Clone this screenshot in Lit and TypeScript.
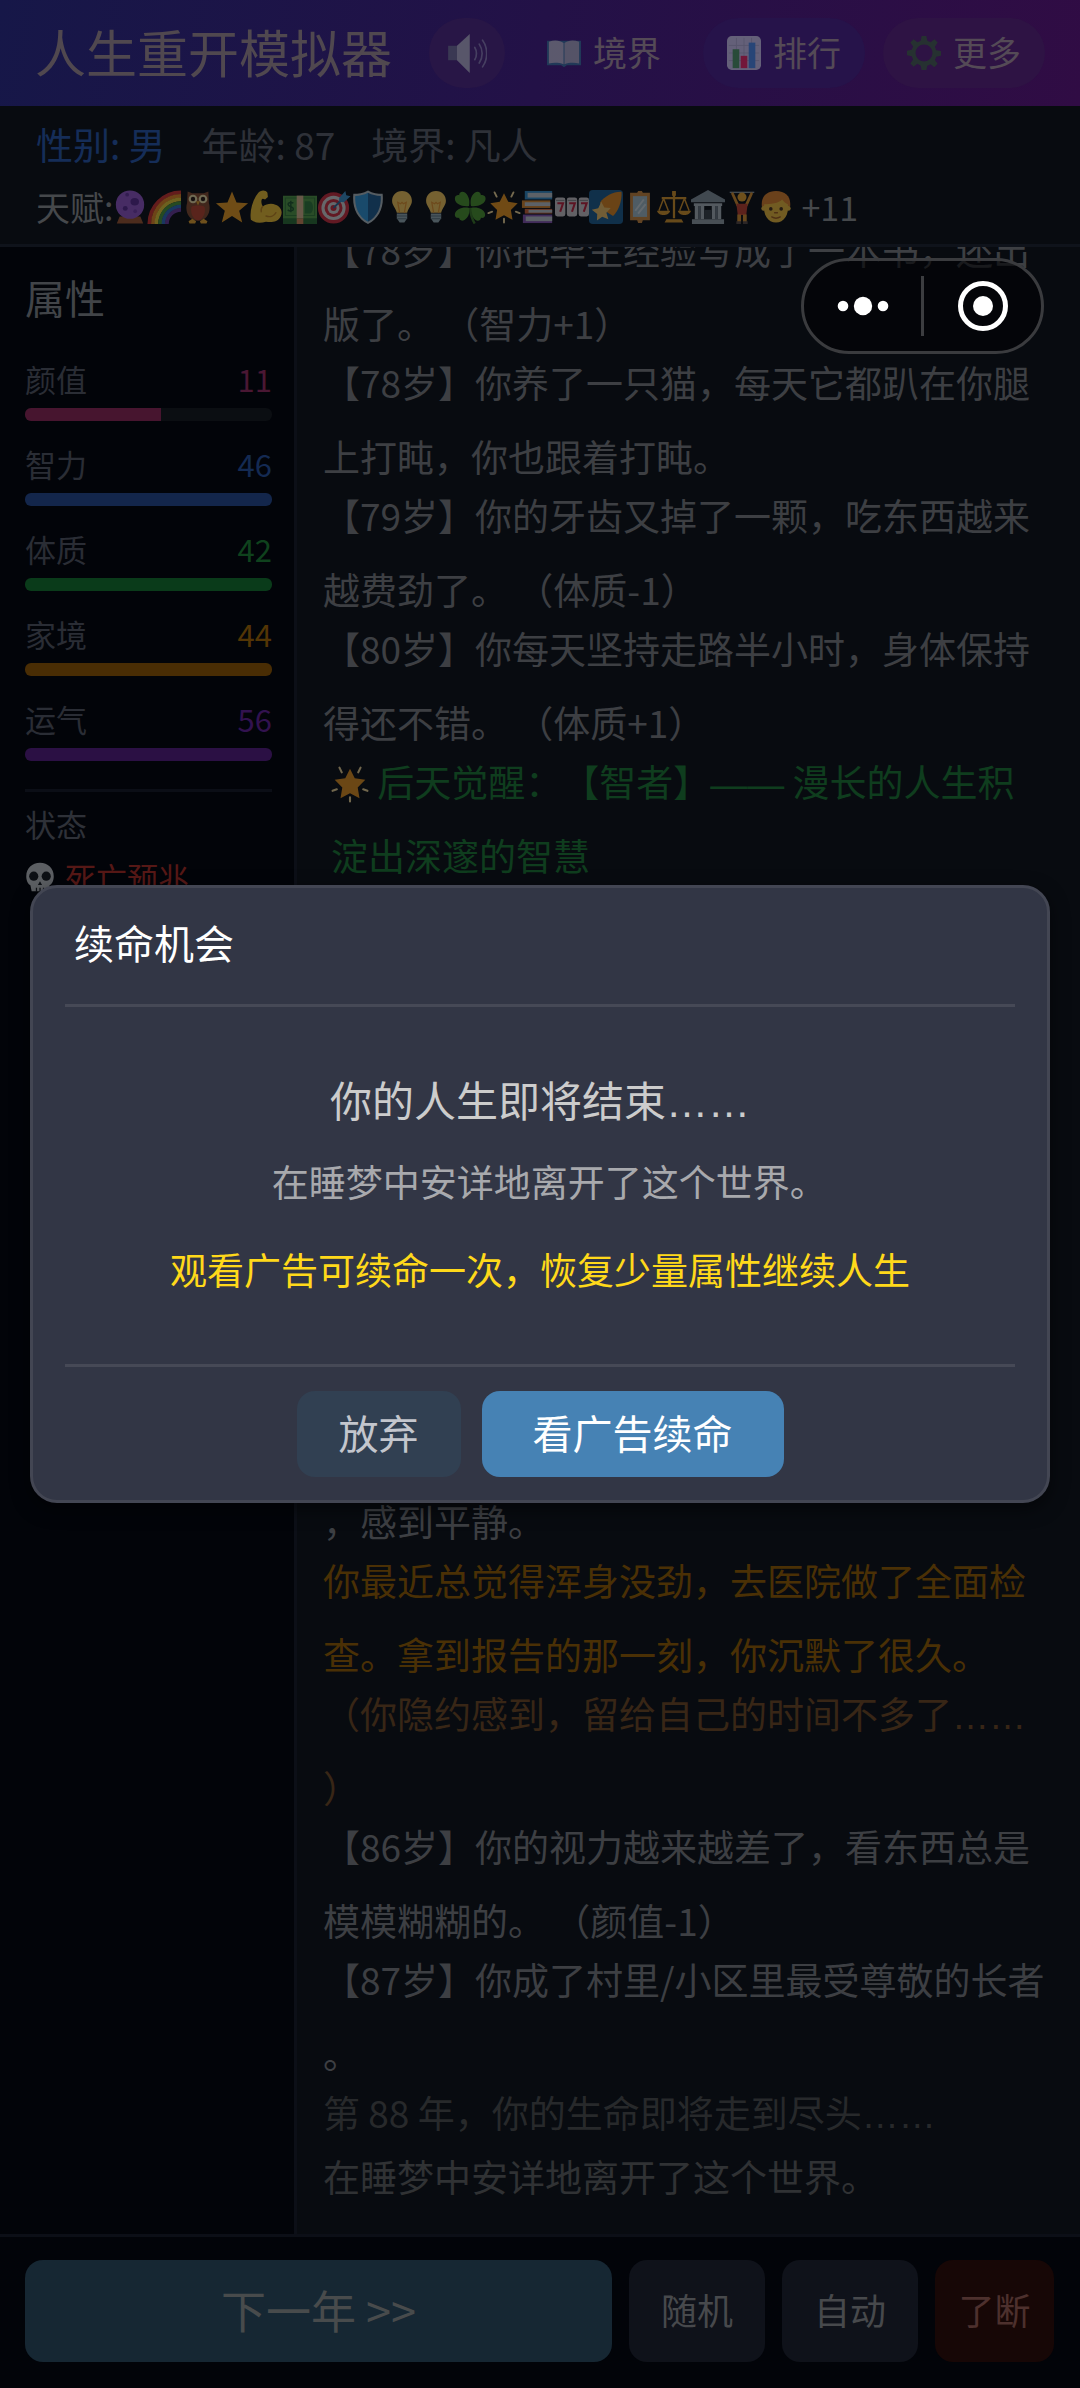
import { LitElement, html, svg, css, nothing } from "lit";
import type { SVGTemplateResult } from "lit";
import { customElement, state } from "lit/decorators.js";

type Tone = "plain" | "gain" | "warn" | "hint" | "faint" | "final";

interface LogEntry {
  tone: Tone;
  lines: string[];
  icon?: string;
}

interface Stat {
  label: string;
  value: number;
  percent: number;
  tone: string;
}

/* Emoji-style pictures, all drawn on a 36 x 36 grid. */
const glowStar = svg`
  <path fill="#f49a1c" d="M18 3.500l4.500 9 10 1.500-7.200 7.200 1.700 10.300-9-4.700-9 4.700 1.700-10.300L3.500 14l10-1.500z"/>
  <g stroke="#ffe3a0" stroke-width="2" stroke-linecap="round">
    <path d="M8 2.500l2.200 4.500M28 2.500L25.800 7M1.500 24.500l4-1.500M34.500 24.500l-4-1.500M18 30.500v4"/>
  </g>`;

const bulb = svg`
  <path fill="#ffcf5c" d="M18 1C11.400 1 7.500 5.800 7.500 11.500c0 5 3.800 7.700 5 12.500h11c1.200-4.800 5-7.500 5-12.500C28.500 5.800 24.600 1 18 1z"/>
  <path fill="none" stroke="#f09a2c" stroke-width="1.300" d="M15.500 24l-2-11 3 1.500 1.500-1.500 1.500 1.500 3-1.500-2 11"/>
  <path fill="#9db4bb" d="M12.500 25h11v5l-3 4.500h-5l-3-4.500z"/>
  <path stroke="#5d7680" stroke-width="1.200" d="M12.500 27.500h11M13 30.500h10"/>`;

const pictures: Record<string, SVGTemplateResult> = {
  orb: svg`
    <path fill="#a3572f" d="M7 28h22l3 7.500H4z"/>
    <circle cx="18" cy="15.500" r="15" fill="#9858d0"/>
    <ellipse cx="23" cy="12.500" rx="4.500" ry="4" fill="#5c2a96"/>
    <circle cx="13" cy="19.500" r="2.600" fill="#5c2a96"/>
    <circle cx="15" cy="5" r="2" fill="#6a35a5"/>
    <circle cx="23.500" cy="22.500" r="2" fill="#7a3fb5"/>`,
  rainbow: svg`
    <g fill="none" stroke-width="4">
      <path stroke="#d8322d" d="M2.500 36A33.500 33.500 0 0 1 36 2.500"/>
      <path stroke="#f08a24" d="M6.300 36A29.700 29.700 0 0 1 36 6.300"/>
      <path stroke="#f0cf34" d="M10 36A26 26 0 0 1 36 10"/>
      <path stroke="#4c9a3a" d="M13.800 36A22.200 22.200 0 0 1 36 13.800"/>
      <path stroke="#2f6fc4" d="M17.500 36A18.500 18.500 0 0 1 36 17.500"/>
      <path stroke="#6b3aa0" d="M21 36A15 15 0 0 1 36 21"/>
    </g>`,
  owl: svg`
    <path fill="#8a4b2c" d="M7 1.500l5 2h12l5-2 .5 12C32 21 29 32.500 18 32.500S4 21 6.500 13.500z"/>
    <path fill="#c0452c" d="M11 18c2-2 12-2 14 0 1.500 6-2 14-7 14s-8.500-8-7-14z"/>
    <circle cx="12.700" cy="9.500" r="4.600" fill="#f4e3a8"/>
    <circle cx="23.300" cy="9.500" r="4.600" fill="#f4e3a8"/>
    <circle cx="12.700" cy="9.500" r="2.300" fill="#2c1a12"/>
    <circle cx="23.300" cy="9.500" r="2.300" fill="#2c1a12"/>
    <path fill="#f0a92c" d="M16 12h4l-2 4.500zM8 33l4-2.500 4 2.500-1 2.500H9zM20 33l4-2.500 4 2.500-1 2.500h-6z"/>`,
  star: svg`<path fill="#f2a01e" d="M18 1.500l4.800 11.800 12.200.7-9.400 8 3.200 12.500L18 27.500 7.200 34.500 10.400 22 1 14l12.200-.7z"/>`,
  arm: svg`
    <path fill="#f7c531" d="M9.500 3.500C12 0 17.500-.5 19.500 3l.5 4.500-3 2.500c-2-1-3-1-3.500 0-1 2.500 0 5.500 1 7.500 4-3 9.500-3.500 13.500-2C34 17.500 36 23 33.500 28c-3 6-10 6.500-15.500 5.500-6 2-12 1.500-16-2C.5 23 3.500 11 9.500 3.500z"/>
    <path fill="none" stroke="#c98a1c" stroke-width="1.500" stroke-linecap="round" d="M14.500 17.500c-1.500 1.500-2 3.500-1.500 5.500M18 27.500c4 1.500 8.500.5 10.500-3.500"/>`,
  money: svg`
    <path fill="#2a6f34" d="M0 29h36v7H0z"/>
    <path fill="#55a046" d="M0 6h36v24H0z"/>
    <path fill="none" stroke="#357f38" stroke-width="1.200" d="M2.500 8.500h31v18.500h-31z"/>
    <path fill="#2f7d3a" d="M23 12h5c5 0 5 13 0 13h-5z"/>
    <path fill="#e0bb90" d="M14.500 6h7v24h-7z"/>
    <path fill="#d88a5a" d="M14.500 30h7v6h-7z"/>
    <path fill="none" stroke="#1f5a2c" stroke-width="1.600" d="M11 14c-1.500-1.500-6-1-5.500 1.500.5 2.500 5.500 2 5.500 4.500 0 2.300-4 2.800-6 1M8.300 11.500v12"/>`,
  target: svg`
    <circle cx="17.500" cy="19" r="16.500" fill="#d42c3c"/>
    <circle cx="17.500" cy="19" r="12.800" fill="#ddd"/>
    <circle cx="17.500" cy="19" r="9.500" fill="#d42c3c"/>
    <circle cx="17.500" cy="19" r="6.300" fill="#ddd"/>
    <circle cx="17.500" cy="19" r="3.200" fill="#d42c3c"/>
    <path stroke="#2a6ea0" stroke-width="2" d="M17.500 19L27 9.500"/>
    <path fill="#3a94d0" d="M23.500 8.500L30 1l1 4.500 4.500 1L28.500 13l-5-.5z"/>`,
  shield: svg`
    <path fill="#b9c6cc" d="M18 .5c5 2.800 10 3.500 15.500 3.500C35 18 30 30 18 36 6 30 1 18 2.500 4 8 4 13 3.300 18 .5z"/>
    <path fill="#2f9be0" d="M18 3c-4.500 2.300-8.500 3.200-13.500 3.300C3.800 18 8 28.300 18 33.700z"/>
    <path fill="#1d5f97" d="M18 3c4.500 2.300 8.500 3.200 13.500 3.300C32.200 18 28 28.300 18 33.700z"/>`,
  bulb,
  clover: svg`
    <path fill="#4e9a2c" d="M17 17C10 18 1.500 15 2 8.500 2.500 5 5.500 5 6.500 5.500 6.500 2 10 .5 13 3c4 3.500 5 9 4 14zM19 17c-1-6 0-11 4-14 3-2.500 6.500-1 6.500 2.500 1-.5 4.500-.5 5 3C35 15 26 18 19 17zM17 19c1 6-1 10-4.500 12.500-3 2-6 .5-6-2-2 .5-5-.5-4.500-4C3 20.500 10 17.500 17 19zM19 19c7-1.500 14 1.500 15 6.500.5 3.500-2 4.500-4.500 4 0 2.500-2.500 4-5 2.500-3.500-2-6-7-5.500-13z"/>
    <path fill="none" stroke="#3a7a24" stroke-width="2.500" d="M18 19c.5 6 1.500 11 5 16.500"/>`,
  glow: glowStar,
  books: svg`
    <path fill="#2f8fd0" d="M4 1h29v9H4z"/><path fill="#c8d0d6" d="M7 3h26v5H7z"/>
    <path fill="#e08a2c" d="M1 11h30v8H1z"/><path fill="#c8d0d6" d="M4 13h27v4H4z"/>
    <path fill="#d8663a" d="M4 20h29v5H4z"/><path fill="#c8d0d6" d="M8 21h25v3H8z"/>
    <path fill="#8a55b8" d="M2 26h31v9H2z"/><path fill="#c8d0d6" d="M5 28h28v5H5z"/>`,
  slots: svg`
    <g fill="#d4d0d2"><rect y="8" width="11" height="20" rx="2.500"/><rect x="12.500" y="8" width="11" height="20" rx="2.500"/><rect x="25" y="8" width="11" height="20" rx="2.500"/></g>
    <path fill="none" stroke="#c8203c" stroke-width="2.200" d="M2.500 14h6l-3 9M15 14h6l-3 9M27.500 14h6l-3 9"/>
    <path stroke="#888" stroke-width="1" d="M1 11h9M13.500 11h9M26 11h9"/>`,
  comet: svg`
    <rect width="36" height="36" rx="4" fill="#1b5f94"/>
    <path fill="#e88a1e" d="M34.500 2c-8-.5-18 4.500-23 11.500l6 9 8 5C31 22 35 12 34.500 2z"/>
    <path fill="#f7c768" d="M13 12.500l3.200 6 6.800.5-4.600 5 2.100 7-6.500-2.600-5.600 4 .3-7L3 21l6.800-1.700z"/>`,
  mirror: svg`
    <path fill="#d28a3c" d="M16 1h4l1 2h7.500v29H21l-1 3h-4l-1-3H7.500V3H15z"/>
    <path fill="#a9c4d0" d="M10.500 6.500h15v22h-15z"/>
    <path stroke="#d8e2e6" stroke-width="2" d="M13 22l9-12M16 25l8-10"/>`,
  scales: svg`
    <g fill="none" stroke="#e09a28" stroke-width="1.600"><path d="M7 9L2 22M7 9l5 13M29 9l-5 13M29 9l5 13"/><path stroke-width="2.400" d="M5 8.500h26M18 2v28"/></g>
    <path fill="#e09a28" d="M0 22h14c-1 6-13 6-14 0zM22 22h14c-1 6-13 6-14 0zM10 31h16l2 3.500H8zM16 1h4v5h-4z"/>`,
  bank: svg`
    <path fill="#8a98a2" d="M18 0L36 10v3H0v-3z"/>
    <path fill="#b3bdc4" d="M3 14h30v3H3zM4 17h4v14H4zM28 17h4v14h-4zM10 17h4v14h-4zM22 17h4v14h-4z"/>
    <path fill="#6d7a84" d="M8 17h2v14H8zM26 17h2v14h-2z"/>
    <path fill="#3a434a" d="M14 21h8v10h-8z"/>
    <path fill="#9aa6ae" d="M1 31h34v5H1z"/>`,
  lifter: svg`
    <path stroke="#8b9aa4" stroke-width="1.500" d="M5 2.500h26"/>
    <path fill="none" stroke="#e0942c" stroke-width="3" stroke-linecap="round" d="M8 4l5.500 12M28 4l-5.500 12"/>
    <circle cx="18" cy="7.500" r="4.800" fill="#f0a92c"/>
    <path fill="#c8402c" d="M12 14.500h12l-1.500 12h-9z"/>
    <path fill="#e0942c" d="M13 26h4v8h-4zM19 26h4v8h-4z"/>
    <path fill="#5a4a44" d="M12 33h5v3h-5zM19 33h5v3h-5z"/>`,
  man: svg`
    <path fill="#e8862a" d="M3 17C2 7 8 1 18 1s16 6 15 16l-3 4H6z"/>
    <path fill="#f7c23a" d="M5.500 15c6 0 16-1 19-5 1.500 2.500 4 4 6 5C32 26 26.500 34.500 18 34.500S4 26 5.500 15z"/>
    <circle cx="5" cy="19.500" r="2.600" fill="#f7c23a"/><circle cx="31" cy="19.500" r="2.600" fill="#f7c23a"/>
    <circle cx="12.500" cy="20" r="1.900" fill="#4a3018"/><circle cx="23.500" cy="20" r="1.900" fill="#4a3018"/>
    <path fill="none" stroke="#a8601c" stroke-width="1.500" stroke-linecap="round" d="M16.500 24h3M13.500 28.500c2.500 1.500 6.500 1.500 9 0"/>`,
  skull: svg`
    <path fill="#c9cdd0" d="M18 1C8.500 1 1.500 7.500 1.500 17c0 6 2.500 9.500 5 11l1.500 7h20l1.500-7c2.500-1.500 5-5 5-11C34.500 7.500 27.500 1 18 1z"/>
    <circle cx="10.500" cy="17" r="5.500" fill="#1c2024"/><circle cx="25.500" cy="17" r="5.500" fill="#1c2024"/>
    <path fill="#1c2024" d="M18 23l2.500 4.500h-5zM13 31h1.500v5H13zM17.300 31h1.500v5h-1.500zM21.500 31H23v5h-1.500z"/>`,
  speaker: svg`
    <path fill="#4c5a60" d="M1 11.500h9v13H1z"/>
    <path fill="#88968f" d="M9 11.500L20.500 1v35L9 24.500z"/>
    <g fill="none" stroke="#65697c" stroke-width="1.500" stroke-linecap="round"><path d="M25 13c2 3 2 8 0 11M29 10c3.500 5 3.500 12 0 17M32 6.500c5 7 5 17 0 24"/></g>`,
  book: svg`
    <path fill="#1f5a66" d="M0 5h36v26H21l-3 2-3-2H0z"/>
    <path fill="#8a958c" d="M2 6c6-2 12-1.500 15.500 1.500V30C13 28 7 28 2 29z"/>
    <path fill="#7d8a82" d="M34 6c-6-2-12-1.500-15.500 1.500V30C23 28 29 28 34 29z"/>`,
  chart: svg`
    <rect width="36" height="36" rx="5" fill="#98a0a0"/>
    <path stroke="#818a8a" stroke-width="1" d="M2 10h32M2 18h32M2 26h32M10 2v32M18 2v32M26 2v32"/>
    <path fill="#2c7a2c" d="M6 14h7v20H6z"/><path fill="#b01c2c" d="M14.500 21h7v13h-7z"/><path fill="#2a6f9c" d="M23 7h7v27h-7z"/>`,
  gear: svg`
    <path fill="#26352f" fill-rule="evenodd" d="M15.500 0h5l1 5 3.500 1.500L29 3.500 32.500 7l-3 4.500 1.500 3.500 5 1v5l-5 1-1.500 3.500 3 4-3.500 3.500-4-3-3.500 1.500-1 5h-5l-1-5L11 29.500l-4 3L3.500 29l3-4L5 21.500l-5-1v-5l5-1L6.500 11l-3-4L7 3.500l4 3L14.500 5zM18 9a9 9 0 1 0 0 18 9 9 0 0 0 0-18z"/>`,
};

const picture = (name: string, cls: string) =>
  html`<svg class=${cls} viewBox="0 0 36 36" aria-hidden="true">${pictures[name]}</svg>`;

/* Ellipses sit on the baseline and long dashes fill their full width. */
const withMarks = (text: string) =>
  text.split(/(……|——)/).map((part, i) => (i % 2 ? html`<span class="mark">${part}</span>` : part));

const talents = [
  "orb", "rainbow", "owl", "star", "arm", "money", "target", "shield", "bulb", "bulb",
  "clover", "glow", "books", "slots", "comet", "mirror", "scales", "bank", "lifter", "man",
];

const stats: Stat[] = [
  { label: "颜值", value: 11, percent: 55, tone: "pink" },
  { label: "智力", value: 46, percent: 100, tone: "blue" },
  { label: "体质", value: 42, percent: 100, tone: "green" },
  { label: "家境", value: 44, percent: 100, tone: "amber" },
  { label: "运气", value: 56, percent: 100, tone: "violet" },
];

const earlier: LogEntry[] = [
  { tone: "plain", lines: ["【78岁】你把毕生经验写成了一本书，还出", "版了。 （智力+1）"] },
  { tone: "plain", lines: ["【78岁】你养了一只猫，每天它都趴在你腿", "上打盹，你也跟着打盹。"] },
  { tone: "plain", lines: ["【79岁】你的牙齿又掉了一颗，吃东西越来", "越费劲了。 （体质-1）"] },
  { tone: "plain", lines: ["【80岁】你每天坚持走路半小时，身体保持", "得还不错。 （体质+1）"] },
  { tone: "gain", icon: "glow", lines: [" 后天觉醒：【智者】—— 漫长的人生积", "淀出深邃的智慧"] },
];

const latest: LogEntry[] = [
  { tone: "plain", lines: ["，感到平静。"] },
  { tone: "warn", lines: ["你最近总觉得浑身没劲，去医院做了全面检", "查。拿到报告的那一刻，你沉默了很久。"] },
  { tone: "hint", lines: ["（你隐约感到，留给自己的时间不多了……", "）"] },
  { tone: "plain", lines: ["【86岁】你的视力越来越差了，看东西总是", "模模糊糊的。 （颜值-1）"] },
  { tone: "plain", lines: ["【87岁】你成了村里/小区里最受尊敬的长者", "。"] },
  { tone: "faint", lines: ["第 88 年，你的生命即将走到尽头……"] },
  { tone: "final", lines: ["在睡梦中安详地离开了这个世界。"] },
];

@customElement("app-root")
export class AppRoot extends LitElement {
  @state() private dialogOpen = true;

  static styles = css`
    :host {
      display: block;
      font-family: "Noto Sans CJK SC", sans-serif;
      font-weight: 400;
    }
    * { box-sizing: border-box; }
    h1, h2, p { margin: 0; font-weight: inherit; }
    button {
      margin: 0;
      padding: 0;
      border: 0;
      background: none;
      font: inherit;
      color: inherit;
      cursor: pointer;
    }
    .page {
      position: relative;
      display: flex;
      flex-direction: column;
      min-height: 100vh;
      overflow: hidden;
      background: #020409;
    }

    .top {
      display: flex;
      align-items: center;
      gap: 18px;
      height: 106px;
      padding: 0 35px;
      background: linear-gradient(100deg, #161748, #231147 50%, #300c44);
    }
    .title {
      flex: 1;
      padding-bottom: 4px;
      font-size: 51px;
      line-height: 72px;
      color: #50484f;
      white-space: nowrap;
    }
    .pill {
      display: flex;
      align-items: center;
      justify-content: center;
      gap: 12px;
      height: 70px;
      padding: 0 24px;
      border-radius: 35px;
      font-size: 34px;
      color: #544a56;
      white-space: nowrap;
      background: #26134a;
    }
    .pill span { padding-bottom: 4px; }
    .pill.sound { padding: 0 18px; background: #281646; }
    .pill.realm { background: none; }
    .pill.more { background: #2e1344; }
    .pic-head { width: 34px; height: 34px; opacity: 0.55; }
    .more .pic-head { opacity: 0.9; }
    .pic-sound { width: 40px; height: 40px; opacity: 0.5; }

    .info {
      padding: 10px 36px 9px;
      border-bottom: 3px solid #0f131b;
      background: #080b10;
      white-space: nowrap;
    }
    .facts {
      display: flex;
      gap: 36px;
      font-size: 37px;
      line-height: 56px;
      color: #2e3138;
    }
    .facts .sex { color: #152d58; }
    .talents {
      display: flex;
      align-items: center;
      padding-top: 7px;
      font-size: 34px;
      line-height: 56px;
      color: #45484b;
    }
    .pic-talent { width: 34px; height: 34px; opacity: 0.44; }
    .extra { padding-left: 8px; }

    .main { flex: 1; display: flex; min-height: 0; }
    .side {
      width: 297px;
      padding: 22px 22px 0 25px;
      border-right: 3px solid #0c0f17;
    }
    .side-title {
      font-size: 40px;
      line-height: 56px;
      margin-bottom: 32px;
      color: #414448;
    }
    .stat { margin-bottom: 21px; }
    .stat-head {
      display: flex;
      justify-content: space-between;
      font-size: 31px;
      line-height: 44px;
      margin-bottom: 7px;
      color: #2a2d35;
    }
    .track { height: 13px; border-radius: 6px; overflow: hidden; background: #0b0e12; }
    .fill { height: 100%; }
    .pink .fill { background: #47152f; } .pink .num { color: #4a1733; }
    .blue .fill { background: #13264b; } .blue .num { color: #142a52; }
    .green .fill { background: #0a3b1a; } .green .num { color: #0f421d; }
    .amber .fill { background: #492d04; } .amber .num { color: #533505; }
    .violet .fill { background: #2b1044; } .violet .num { color: #32124f; }
    .state {
      margin-top: 28px;
      padding-top: 10px;
      border-top: 3px solid #0b0e16;
      font-size: 31px;
      line-height: 44px;
      color: #2e3138;
    }
    .omen {
      display: flex;
      align-items: center;
      gap: 10px;
      margin-top: 9px;
      color: #561816;
    }
    .pic-omen { width: 30px; height: 34px; opacity: 0.45; }

    .log {
      flex: 1;
      min-width: 0;
      display: flex;
      flex-direction: column;
      justify-content: space-between;
      gap: 74px;
      padding: 0 26px 21px 26px;
      overflow: hidden;
      background: #080b10;
      font-size: 37px;
      line-height: 74px;
      white-space: nowrap;
      text-spacing-trim: space-all;
    }
    .earlier { margin-top: -35px; }
    .entry + .entry { margin-top: -15px; }
    .entry + .entry.final { margin-top: -10px; }
    .plain { color: #3d3f43; }
    .gain { color: #0f3d1e; padding-left: 8px; }
    .warn { color: #4a3005; }
    .hint { color: #382616; }
    .faint { color: #27292b; }
    .final { color: #303234; }
    .pic-log { width: 38px; height: 38px; vertical-align: -6px; opacity: 0.42; }
    .mark { font-family: "Liberation Sans", sans-serif; line-height: 0; }

    .bar {
      display: flex;
      gap: 17px;
      padding: 23px 26px 26px 25px;
      border-top: 3px solid #0c0f17;
    }
    .act {
      width: 136px;
      height: 102px;
      padding-bottom: 4px;
      border-radius: 18px;
      font-size: 36px;
      color: #47494c;
      background: #0f121a;
    }
    .act.next { flex: 1; font-size: 45px; color: #484b4c; background: #162733; }
    .act.end { width: 119px; color: #4d302d; background: #170706; }

    .capsule {
      position: absolute;
      top: 258px;
      right: 36px;
      display: flex;
      align-items: center;
      width: 243px;
      height: 96px;
      border: 3px solid #3a3b3e;
      border-radius: 48px;
      background: rgba(2, 2, 5, 0.6);
    }
    .cap-btn { flex: 1; display: flex; justify-content: center; align-items: center; height: 90px; }
    .cap-line { width: 3px; height: 60px; background: #3c3d40; }
    .cap-dots { width: 52px; height: 20px; fill: #fff; }
    .cap-ring { width: 50px; height: 50px; fill: #fff; }

    .layer {
      position: absolute;
      inset: 0;
      display: flex;
      align-items: center;
      justify-content: center;
      padding: 0 30px;
    }
    .dialog {
      width: 100%;
      padding: 0 32px;
      border: 3px solid #434653;
      border-radius: 27px;
      background: #323645;
      box-shadow: 0 6px 18px rgba(0, 0, 0, 0.5);
      text-align: center;
    }
    .dialog-title {
      padding: 26px 9px 34px;
      border-bottom: 3px solid #464956;
      font-size: 40px;
      line-height: 56px;
      text-align: left;
      color: #fff;
    }
    .dialog-body {
      padding: 60px 0 67px;
      border-bottom: 3px solid #464956;
      font-size: 37px;
      line-height: 56px;
    }
    .lead { font-size: 42px; line-height: 64px; color: #ccc; }
    .cause { margin-top: 22px; color: #a8a9ad; font-feature-settings: "halt"; }
    .offer { margin-top: 32px; color: #ffd91a; }
    .dialog-foot { display: flex; justify-content: center; gap: 21px; padding: 24px 0 23px; }
    .choice {
      height: 86px;
      padding: 0 42px 4px;
      border-radius: 18px;
      font-size: 40px;
      color: #c3c6cd;
      background: #314052;
    }
    .choice.primary { padding: 0 51px 4px; color: #fff; background: #4682b4; }
  `;

  private close() {
    this.dialogOpen = false;
  }

  private renderEntry(entry: LogEntry) {
    return html`<p class="entry ${entry.tone}">${entry.icon ? picture(entry.icon, "pic-log") : nothing}${entry.lines.map(
      (line, i) => html`${i ? html`<br />` : nothing}${withMarks(line)}`
    )}</p>`;
  }

  private renderStat(stat: Stat) {
    return html`
      <div class="stat ${stat.tone}">
        <div class="stat-head"><span>${stat.label}</span><span class="num">${stat.value}</span></div>
        <div class="track"><div class="fill" style="width:${stat.percent}%"></div></div>
      </div>`;
  }

  private renderDialog() {
    return html`
      <div class="layer">
        <section class="dialog" role="dialog" aria-modal="true" aria-labelledby="dialog-title">
          <h2 class="dialog-title" id="dialog-title">续命机会</h2>
          <div class="dialog-body">
            <p class="lead">${withMarks("你的人生即将结束……")}</p>
            <p class="cause">在睡梦中安详地离开了这个世界。</p>
            <p class="offer">观看广告可续命一次，恢复少量属性继续人生</p>
          </div>
          <div class="dialog-foot">
            <button class="choice" @click=${this.close}>放弃</button>
            <button class="choice primary" @click=${this.close}>看广告续命</button>
          </div>
        </section>
      </div>`;
  }

  render() {
    return html`
      <div class="page">
        <header class="top">
          <h1 class="title">人生重开模拟器</h1>
          <button class="pill sound">${picture("speaker", "pic-sound")}</button>
          <button class="pill realm">${picture("book", "pic-head")}<span>境界</span></button>
          <button class="pill">${picture("chart", "pic-head")}<span>排行</span></button>
          <button class="pill more">${picture("gear", "pic-head")}<span>更多</span></button>
        </header>

        <section class="info">
          <div class="facts">
            <span class="sex">性别: 男</span><span>年龄: 87</span><span>境界: 凡人</span>
          </div>
          <div class="talents">
            <span>天赋:</span>${talents.map((name) => picture(name, "pic-talent"))}<span class="extra">+11</span>
          </div>
        </section>

        <main class="main">
          <aside class="side">
            <h2 class="side-title">属性</h2>
            ${stats.map((stat) => this.renderStat(stat))}
            <div class="state">
              <div>状态</div>
              <div class="omen">${picture("skull", "pic-omen")}<span>死亡预兆</span></div>
            </div>
          </aside>
          <section class="log">
            <div class="earlier">${earlier.map((entry) => this.renderEntry(entry))}</div>
            <div>${latest.map((entry) => this.renderEntry(entry))}</div>
          </section>
        </main>

        <footer class="bar">
          <button class="act next">下一年 &gt;&gt;</button>
          <button class="act">随机</button>
          <button class="act">自动</button>
          <button class="act end">了断</button>
        </footer>

        ${this.dialogOpen ? this.renderDialog() : nothing}

        <div class="capsule">
          <button class="cap-btn">
            <svg class="cap-dots" viewBox="0 0 52 20" aria-hidden="true">
              <circle cx="6" cy="10" r="5.300" /><circle cx="26" cy="10" r="9.200" /><circle cx="46" cy="10" r="5.300" />
            </svg>
          </button>
          <span class="cap-line"></span>
          <button class="cap-btn">
            <svg class="cap-ring" viewBox="0 0 50 50" aria-hidden="true">
              <circle cx="25" cy="25" r="22.500" fill="none" stroke="#fff" stroke-width="5" /><circle cx="25" cy="25" r="10" />
            </svg>
          </button>
        </div>
      </div>`;
  }
}
